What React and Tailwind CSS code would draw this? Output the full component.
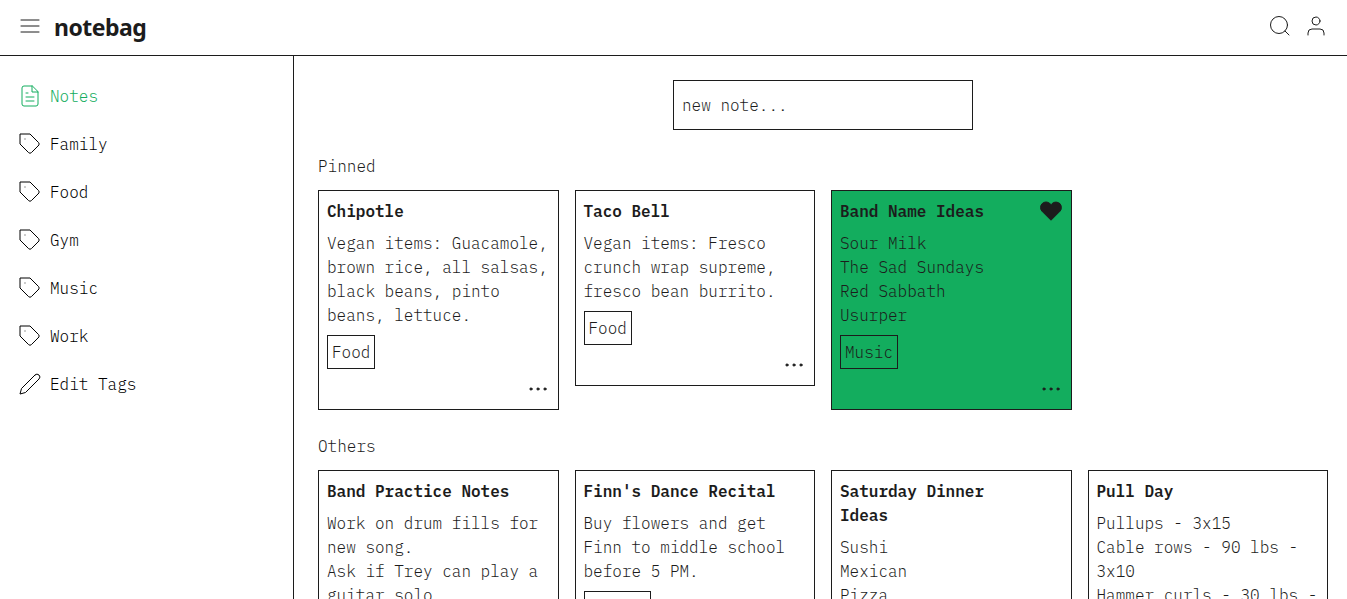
const line = {
  fill: 'none',
  stroke: 'currentColor',
  strokeWidth: 1,
  strokeLinecap: 'round',
  strokeLinejoin: 'round',
};

function MenuIcon() {
  return (
    <svg className="size-6 shrink-0" viewBox="0 0 24 24" {...line}>
      <path d="M3 6h18M3 12h18M3 18h18" />
    </svg>
  );
}

function SearchIcon() {
  return (
    <svg className="size-6" viewBox="0 0 24 24" {...line}>
      <circle cx="11" cy="11" r="8.5" />
      <path d="M21 21l-4-4" />
    </svg>
  );
}

function UserIcon() {
  return (
    <svg className="size-6" viewBox="0 0 24 24" {...line}>
      <path d="M20 21v-2a4 4 0 0 0-4-4H8a4 4 0 0 0-4 4v2" />
      <circle cx="12" cy="7" r="4" />
    </svg>
  );
}

function NoteIcon() {
  return (
    <svg className="size-6" viewBox="0 0 24 24" {...line}>
      <path d="M14 2H6a2 2 0 0 0-2 2v16a2 2 0 0 0 2 2h12a2 2 0 0 0 2-2V8z" />
      <path d="M14 2v6h6M16 13H8M16 17H8M10 9H8" />
    </svg>
  );
}

function TagIcon() {
  return (
    <svg className="size-6" viewBox="0 0 24 24" {...line}>
      <path d="M20.59 13.41l-7.17 7.17a2 2 0 0 1-2.83 0L2 12V2h10l8.59 8.59a2 2 0 0 1 0 2.82z" />
      <path d="M7 7h.01" />
    </svg>
  );
}

function PencilIcon() {
  return (
    <svg className="size-6" viewBox="0 0 24 24" {...line}>
      <path d="M17 3a2.828 2.828 0 1 1 4 4L7.5 20.5 2 22l1.5-5.5L17 3z" />
    </svg>
  );
}

function HeartIcon() {
  return (
    <svg className="size-6 shrink-0" viewBox="0 0 24 24" {...line} fill="currentColor">
      <path d="M20.84 4.61a5.5 5.5 0 0 0-7.78 0L12 5.67l-1.06-1.06a5.5 5.5 0 0 0-7.78 7.78l1.06 1.06L12 21.23l7.78-7.78 1.06-1.06a5.5 5.5 0 0 0 0-7.78z" />
    </svg>
  );
}

function DotsIcon() {
  return (
    <svg className="size-6" viewBox="0 0 24 24" {...line} fill="currentColor">
      <circle cx="5" cy="12" r="1.1" />
      <circle cx="12" cy="12" r="1.1" />
      <circle cx="19" cy="12" r="1.1" />
    </svg>
  );
}

const tags = ['Family', 'Food', 'Gym', 'Music', 'Work'];

const pinned = [
  { title: 'Chipotle', body: 'Vegan items: Guacamole, brown rice, all salsas, black beans, pinto beans, lettuce.', tag: 'Food' },
  { title: 'Taco Bell', body: 'Vegan items: Fresco crunch wrap supreme, fresco bean burrito.', tag: 'Food' },
  { title: 'Band Name Ideas', body: 'Sour Milk\nThe Sad Sundays\nRed Sabbath\nUsurper', tag: 'Music', liked: true },
];

const others = [
  { title: 'Band Practice Notes', body: 'Work on drum fills for new song.\nAsk if Trey can play a guitar solo.', tag: 'Music' },
  { title: "Finn's Dance Recital", body: 'Buy flowers and get Finn to middle school before 5 PM.', tag: 'Family' },
  { title: 'Saturday Dinner Ideas', body: 'Sushi\nMexican\nPizza', tag: 'Food' },
  { title: 'Pull Day', body: 'Pullups - 3x15\nCable rows - 90 lbs - 3x10\nHammer curls - 30 lbs - 3x10', tag: 'Gym' },
];

function NavItem({ icon, label, active }) {
  return (
    <li className={`flex h-12 items-center gap-2 ${active ? 'text-[#13ad5e]' : 'text-black'}`}>
      {icon}
      <span>{label}</span>
    </li>
  );
}

function Note({ title, body, tag, liked }) {
  return (
    <article className={`border border-[#1c1c1c] p-2 ${liked ? 'bg-[#13ad5e]' : 'bg-white'}`}>
      <div className="flex items-start justify-between">
        <h3 className="w-48 font-semibold">{title}</h3>
        {liked && <HeartIcon />}
      </div>
      <p className="-mr-1 mt-2 whitespace-pre-line">{body}</p>
      <div className="mt-2 flex">
        <span className="border border-[#1c1c1c] p-1">{tag}</span>
      </div>
      <div className="mt-2 flex justify-end">
        <DotsIcon />
      </div>
    </article>
  );
}

function Section({ title, notes }) {
  return (
    <section className="mt-6">
      <h2>{title}</h2>
      <div className="mt-3 grid grid-cols-4 items-start gap-4">
        {notes.map((note) => (
          <Note key={note.title} {...note} />
        ))}
      </div>
    </section>
  );
}

export default function App() {
  return (
    <div className="flex h-screen flex-col overflow-hidden bg-white font-['IBM_Plex_Mono','Liberation_Mono',monospace] text-base font-light text-[#1c1c1c]">
      <header className="flex h-14 shrink-0 items-center border-b border-[#1c1c1c] pl-[18px] pr-[19px]">
        <div className="pb-[3px]">
          <MenuIcon />
        </div>
        <h1 className="ml-3 pb-px font-['Segoe_UI','Noto_Sans',sans-serif] text-[23px] leading-8 font-bold tracking-[-0.5px]">notebag</h1>
        <div className="ml-auto flex gap-3 pb-[3px]">
          <SearchIcon />
          <UserIcon />
        </div>
      </header>
      <div className="flex min-h-0 flex-1">
        <nav className="w-[294px] shrink-0 border-r border-[#1c1c1c] pl-[18px] pt-4">
          <ul>
            <NavItem icon={<NoteIcon />} label="Notes" active />
            {tags.map((tag) => (
              <NavItem key={tag} icon={<TagIcon />} label={tag} />
            ))}
            <NavItem icon={<PencilIcon />} label="Edit Tags" />
          </ul>
        </nav>
        <main className="min-w-0 flex-1 overflow-hidden pl-6 pr-[19px] pt-6">
          <div className="mx-auto flex h-[50px] w-[300px] items-center border border-[#1c1c1c] px-2">new note...</div>
          <Section title="Pinned" notes={pinned} />
          <Section title="Others" notes={others} />
        </main>
      </div>
    </div>
  );
}
